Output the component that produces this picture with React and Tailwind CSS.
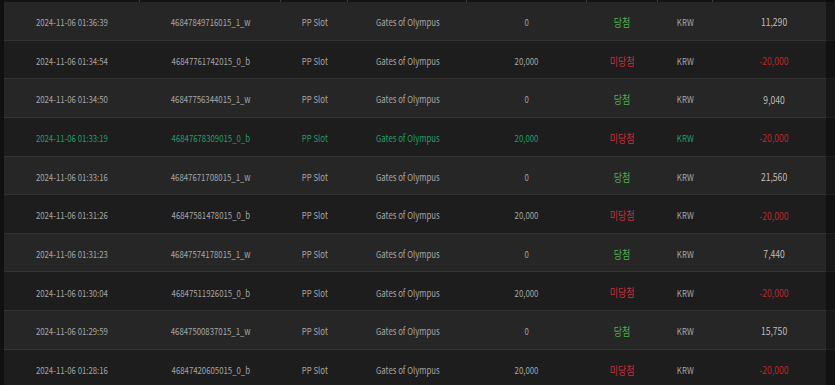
import React from "react";

const rows = [
  ["2024-11-06 01:36:39", "46847849716015_1_w", "0", true, "11,290"],
  ["2024-11-06 01:34:54", "46847761742015_0_b", "20,000", false, "-20,000"],
  ["2024-11-06 01:34:50", "46847756344015_1_w", "0", true, "9,040"],
  ["2024-11-06 01:33:19", "46847678309015_0_b", "20,000", false, "-20,000", true],
  ["2024-11-06 01:33:16", "46847671708015_1_w", "0", true, "21,560"],
  ["2024-11-06 01:31:26", "46847581478015_0_b", "20,000", false, "-20,000"],
  ["2024-11-06 01:31:23", "46847574178015_1_w", "0", true, "7,440"],
  ["2024-11-06 01:30:04", "46847511926015_0_b", "20,000", false, "-20,000"],
  ["2024-11-06 01:29:59", "46847500837015_1_w", "0", true, "15,750"],
  ["2024-11-06 01:28:16", "46847420605015_0_b", "20,000", false, "-20,000"],
];

const cols = [
  "w-[136px]",
  "w-[141px]",
  "w-[67px]",
  "w-[119px]",
  "w-[120px]",
  "w-[71px]",
  "w-[55px]",
  "w-[122px]",
];

function T({ children, className = "" }) {
  return (
    <span className={"inline-block scale-x-[0.82] whitespace-nowrap " + className}>
      {children}
    </span>
  );
}

export default function App() {
  return (
    <div
      className="relative w-[835px] h-[385px] overflow-hidden bg-[#1c1c1c] flex"
      style={{ fontFamily: '"Noto Sans CJK KR", "Noto Sans", sans-serif' }}
    >
      <div className="w-[4px] shrink-0 bg-[#101010]" />
      <div className="flex-1 flex flex-col">
        <div className="h-[2px] shrink-0 flex bg-[#141414]">
          {cols.map((c, i) => (
            <div key={i} className={c + " shrink-0 border-r border-[#3a3a3a]"} />
          ))}
        </div>
        {rows.map((r, i) => {
          const [date, id, bet, win, amt, hl] = r;
          const base = hl ? "text-[#1f9e6c]" : "text-[#a6a6a6]";
          return (
            <div
              key={i}
              className={
                "h-[38.625px] shrink-0 flex items-center pt-[3px] border-b border-[#333333] " +
                (i % 2 === 0 ? "bg-[#262626]" : "bg-[#1d1d1d]")
              }
            >
              <div className={cols[0] + " shrink-0 text-center text-[9.5px] " + base}>
                <T>{date}</T>
              </div>
              <div className={cols[1] + " shrink-0 text-center text-[9.5px] " + base}>
                <T>{id}</T>
              </div>
              <div className={cols[2] + " shrink-0 text-center text-[9.5px] " + base}>
                <T>PP Slot</T>
              </div>
              <div className={cols[3] + " shrink-0 text-center text-[9.5px] " + base}>
                <T>Gates of Olympus</T>
              </div>
              <div className={cols[4] + " shrink-0 text-center text-[9.5px] " + base}>
                <T>{bet}</T>
              </div>
              <div
                className={
                  cols[5] +
                  " shrink-0 text-center text-[11px] " +
                  (win ? "text-[#52b04f]" : "text-[#c2313d]")
                }
              >
                <T>{win ? "당첨" : "미당첨"}</T>
              </div>
              <div className={cols[6] + " shrink-0 text-center text-[9.5px] " + base}>
                <T>KRW</T>
              </div>
              <div
                className={
                  cols[7] +
                  " shrink-0 text-center text-[10.5px] " +
                  (amt.startsWith("-") ? "text-[#b8272e]" : "text-[#bdbdbd]")
                }
              >
                <T>{amt}</T>
              </div>
            </div>
          );
        })}
      </div>
      <div className="absolute right-0 top-0 bottom-0 w-[9px] bg-black/40" />
    </div>
  );
}
